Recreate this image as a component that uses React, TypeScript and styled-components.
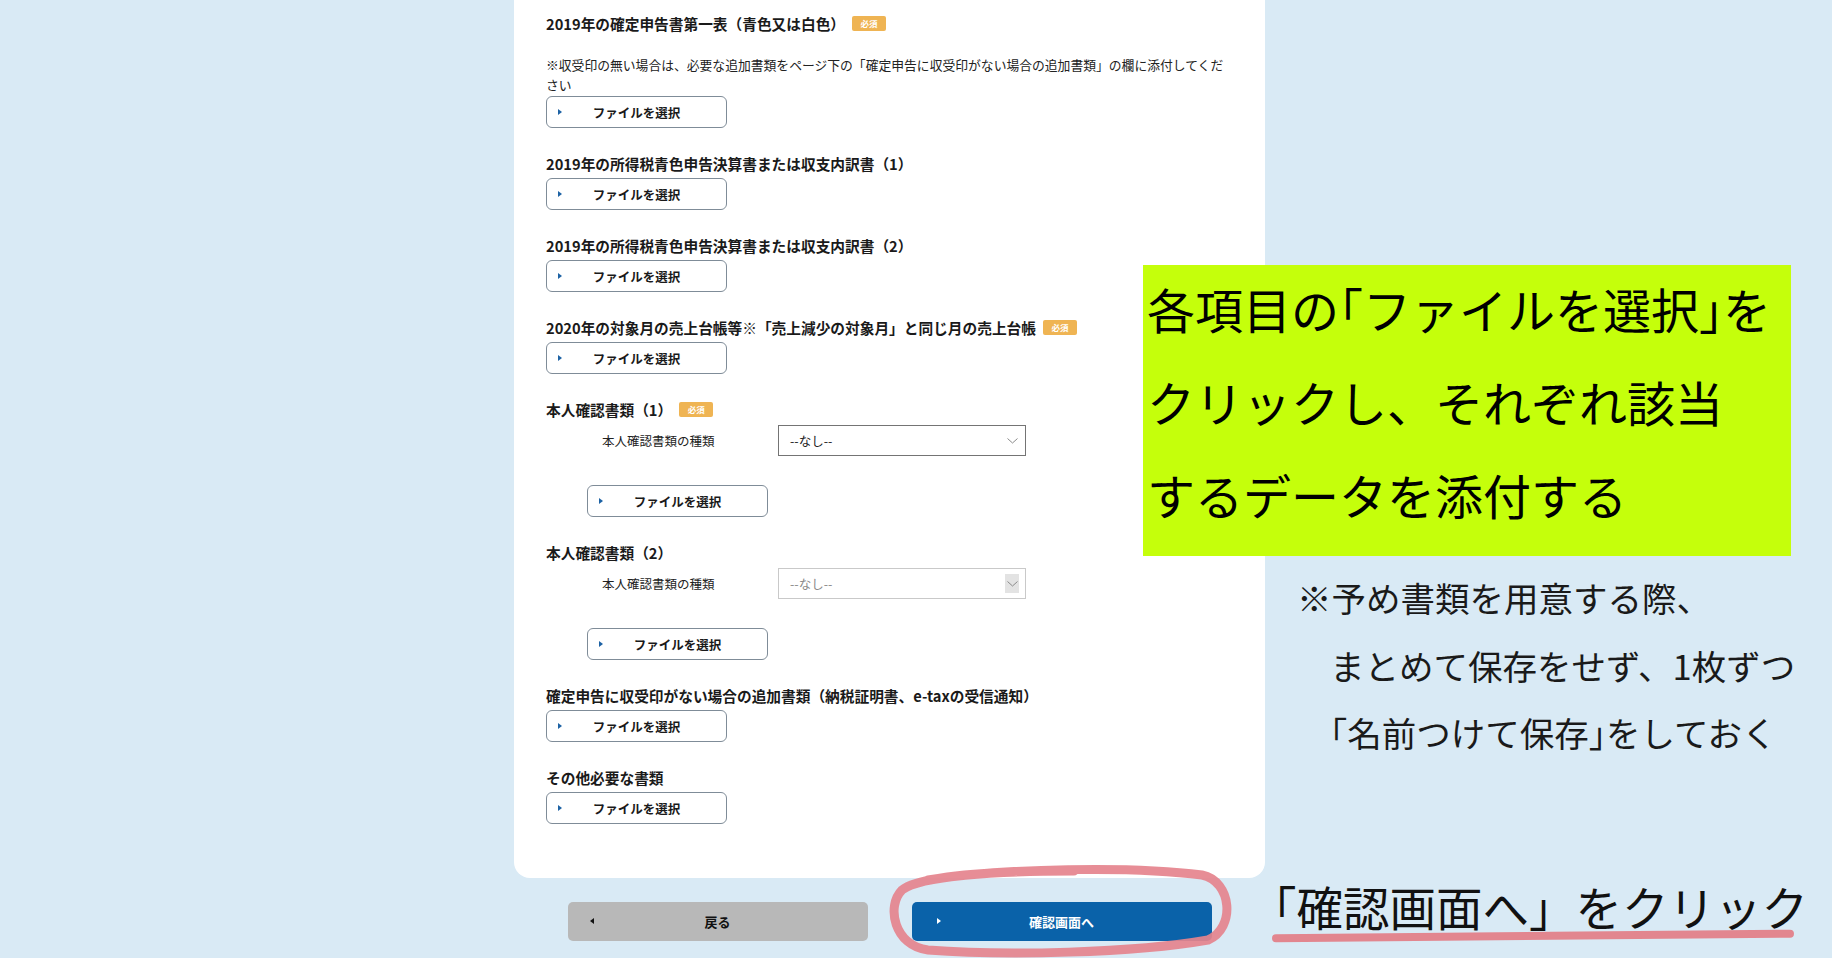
import React from 'react';
import styled, { createGlobalStyle } from 'styled-components';

const GlobalStyle = createGlobalStyle`
  html, body {
    margin: 0;
    padding: 0;
    background: #d9eaf5;
    font-family: "Noto Sans CJK JP", "Noto Sans", sans-serif;
    color: #1a1a1a;
  }
`;

const Page = styled.div`
  position: relative;
  width: 1832px;
  height: 958px;
  overflow: hidden;
  background: #d9eaf5;
`;

const Main = styled.div`
  display: grid;
  grid-template-columns: 514px 751px 1fr;
`;

const Card = styled.div`
  background: #ffffff;
  border-radius: 0 0 16px 16px;
  padding: 13px 32px 54px 32px;
  display: flex;
  flex-direction: column;
  gap: 25px;
`;

const Item = styled.div`
  display: flex;
  flex-direction: column;
  align-items: flex-start;
`;

const Title = styled.div`
  display: flex;
  align-items: center;
  gap: 7px;
  height: 20px;
  font-size: 14.7px;
  font-weight: 700;
  color: #1a1a1a;
  white-space: nowrap;
`;

const Badge = styled.span`
  display: inline-flex;
  align-items: center;
  justify-content: center;
  width: 34px;
  height: 15px;
  border-radius: 2px;
  background: #efb453;
  color: #ffffff;
  font-size: 8.5px;
  font-weight: 700;
`;

const Note = styled.p`
  margin: 22px 0 -4px 0;
  font-size: 12.8px;
  line-height: 20px;
  color: #222;
`;

const FileButton = styled.button<{ $indent?: number }>`
  position: relative;
  display: flex;
  align-items: center;
  justify-content: center;
  width: 181px;
  height: 32px;
  margin: 5px 0 0 ${(p) => p.$indent || 0}px;
  padding: 0;
  border: 1px solid #7f8c98;
  border-radius: 6px;
  background: #ffffff;
  font-family: inherit;
  font-size: 12.5px;
  font-weight: 700;
  color: #1a1a1a;
  cursor: pointer;
`;

const Caret = styled.span<{ $color: string; $dir?: 'left' | 'right'; $offset: number }>`
  position: absolute;
  left: ${(p) => p.$offset}px;
  top: 50%;
  margin-top: -3.5px;
  width: 0;
  height: 0;
  border-top: 3.5px solid transparent;
  border-bottom: 3.5px solid transparent;
  ${(p) =>
    p.$dir === 'left'
      ? `border-right: 4px solid ${p.$color};`
      : `border-left: 4px solid ${p.$color};`}
`;

const SubRow = styled.div`
  display: flex;
  align-items: center;
  margin-top: 6px;
  padding-left: 56px;
`;

const SubLabel = styled.span`
  width: 176px;
  font-size: 12.5px;
  color: #222;
`;

const SelectBox = styled.div<{ $disabled?: boolean }>`
  display: flex;
  align-items: center;
  justify-content: space-between;
  box-sizing: border-box;
  width: 248px;
  height: 31px;
  padding: 0 6px 0 11px;
  border: 1px solid ${(p) => (p.$disabled ? '#c9c9c9' : '#747474')};
  background: #ffffff;
  font-size: 12.5px;
  color: ${(p) => (p.$disabled ? '#8a8a8a' : '#222')};
`;

const Chevron = styled.span<{ $disabled?: boolean }>`
  display: flex;
  align-items: center;
  justify-content: center;
  width: 14px;
  height: 19px;
  background: ${(p) => (p.$disabled ? '#e3e3e3' : 'transparent')};
`;

const Gap = styled.div`
  height: 24px;
`;

const Aside = styled.div`
  padding: 564px 0 0 32px;
  font-size: 34.5px;
  line-height: 67.5px;
  color: #1a1a1a;
  white-space: nowrap;
`;

const AsideLine = styled.div<{ $indent?: boolean }>`
  padding-left: ${(p) => (p.$indent ? '33px' : '0')};
`;

const Bracket = styled.span`
  font-feature-settings: "halt";
`;

const Footer = styled.div`
  display: grid;
  grid-template-columns: 514px 751px 1fr;
  padding-top: 24px;
`;

const ButtonRow = styled.div`
  display: flex;
  justify-content: center;
  gap: 44px;
`;

const NavButton = styled.button<{ $primary?: boolean }>`
  position: relative;
  width: 300px;
  height: 39px;
  border: none;
  border-radius: 5px;
  background: ${(p) => (p.$primary ? '#0a62a9' : '#b8b8b8')};
  color: ${(p) => (p.$primary ? '#ffffff' : '#111')};
  font-family: inherit;
  font-size: 13px;
  font-weight: 700;
  cursor: pointer;
`;

const ClickNote = styled.div`
  position: relative;
  align-self: start;
  justify-self: start;
  margin: -27px 0 0 -15px;
  font-size: 46.5px;
  line-height: 62px;
  color: #111;
  white-space: nowrap;

  &::after {
    content: '';
    position: absolute;
    left: 22px;
    right: 14px;
    bottom: -3px;
    height: 8px;
    border-radius: 5px;
    background: #e2868f;
    transform: rotate(-0.5deg);
  }
`;

const Callout = styled.div`
  position: absolute;
  left: 1143px;
  top: 265px;
  width: 648px;
  height: 291px;
  box-sizing: border-box;
  padding: 0 0 0 4px;
  background: #c5ff0b;
  font-size: 48px;
  line-height: 93px;
  color: #000;
  white-space: nowrap;
`;

const CalloutText = styled.div`
  margin-top: -3px;
`;

const CircleMark = styled.svg`
  position: absolute;
  left: 884px;
  top: 864px;
  pointer-events: none;
`;

const fileItems = [
  '2019年の所得税青色申告決算書または収支内訳書（1）',
  '2019年の所得税青色申告決算書または収支内訳書（2）',
];

const ChevronIcon = () => (
  <svg width="11" height="6" viewBox="0 0 11 6">
    <polyline points="0.5,0.5 5.5,5 10.5,0.5" fill="none" stroke="#8a8a8a" strokeWidth="1" />
  </svg>
);

const SelectFile: React.FC<{ indent?: number }> = ({ indent }) => (
  <FileButton $indent={indent}>
    <Caret $color="#1d62a4" $offset={11} />
    ファイルを選択
  </FileButton>
);

const IdItem: React.FC<{ title: string; required?: boolean; disabled?: boolean }> = ({
  title,
  required,
  disabled,
}) => (
  <Item>
    <Title>
      {title}
      {required && <Badge>必須</Badge>}
    </Title>
    <SubRow>
      <SubLabel>本人確認書類の種類</SubLabel>
      <SelectBox $disabled={disabled}>
        --なし--
        <Chevron $disabled={disabled}>
          <ChevronIcon />
        </Chevron>
      </SelectBox>
    </SubRow>
    <Gap />
    <SelectFile indent={41} />
  </Item>
);

const App: React.FC = () => {
  return (
    <Page>
      <GlobalStyle />
      <Main>
        <div />
        <Card>
          <Item>
            <Title>
              2019年の確定申告書第一表（青色又は白色）
              <Badge>必須</Badge>
            </Title>
            <Note>
              ※収受印の無い場合は、必要な追加書類をページ下の「確定申告に収受印がない場合の追加書類」の欄に添付してください
            </Note>
            <SelectFile />
          </Item>
          {fileItems.map((t) => (
            <Item key={t}>
              <Title>{t}</Title>
              <SelectFile />
            </Item>
          ))}
          <Item>
            <Title>
              2020年の対象月の売上台帳等※「売上減少の対象月」と同じ月の売上台帳
              <Badge>必須</Badge>
            </Title>
            <SelectFile />
          </Item>
          <IdItem title="本人確認書類（1）" required />
          <IdItem title="本人確認書類（2）" disabled />
          <Item>
            <Title>確定申告に収受印がない場合の追加書類（納税証明書、e-taxの受信通知）</Title>
            <SelectFile />
          </Item>
          <Item>
            <Title>その他必要な書類</Title>
            <SelectFile />
          </Item>
        </Card>
        <Aside>
          <AsideLine>※予め書類を用意する際、</AsideLine>
          <AsideLine $indent>まとめて保存をせず、1枚ずつ</AsideLine>
          <AsideLine $indent>
            <Bracket>「</Bracket>名前つけて保存<Bracket>」</Bracket>をしておく
          </AsideLine>
        </Aside>
      </Main>
      <Footer>
        <div />
        <ButtonRow>
          <NavButton>
            <Caret $color="#111" $dir="left" $offset={22} />
            戻る
          </NavButton>
          <NavButton $primary>
            <Caret $color="#ffffff" $offset={25} />
            確認画面へ
          </NavButton>
        </ButtonRow>
        <ClickNote>「確認画面へ」をクリック</ClickNote>
      </Footer>
      <Callout>
        <CalloutText>
          各項目の<Bracket>「</Bracket>ファイルを選択<Bracket>」</Bracket>を
          <br />
          クリックし、それぞれ該当
          <br />
          するデータを添付する
        </CalloutText>
      </Callout>
      <CircleMark width="352" height="94" viewBox="0 0 352 94">
        <path
          d="M 44 16 C 120 4, 250 2, 318 11 C 348 17, 352 64, 324 76 C 250 89, 120 92, 44 86 C 10 82, 2 42, 18 26 C 36 12, 110 7, 190 7"
          fill="none"
          stroke="#e5838d"
          strokeWidth="9"
          strokeLinecap="round"
          strokeLinejoin="round"
          opacity="0.92"
        />
      </CircleMark>
    </Page>
  );
};

export default App;
